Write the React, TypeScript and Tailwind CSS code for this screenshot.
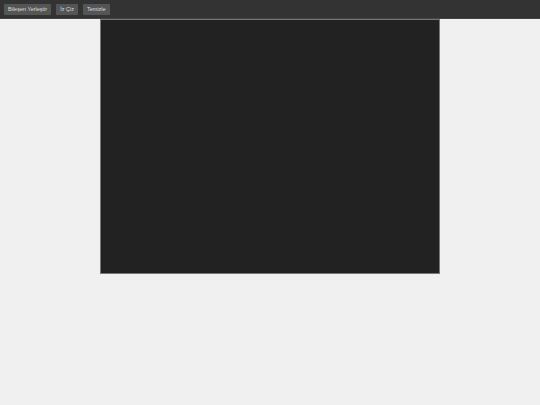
export default function App() {
  return (
    <div className="min-h-[405px] w-full bg-[#f0f0f0]" style={{ fontFamily: '"Liberation Sans", Arial, sans-serif' }}>
      <div className="flex h-[19px] items-center gap-[5px] border-b border-[#444] bg-[#333] px-[4px]">
        <button className="h-[11px] rounded-[1px] bg-[#555] px-[4px] text-[5.5px] leading-[11px] text-[#ddd]">Bileşen Yerleştir</button>
        <button className="h-[11px] rounded-[1px] bg-[#555] px-[4px] text-[5.5px] leading-[11px] text-[#ddd]">İz Çiz</button>
        <button className="h-[11px] rounded-[1px] bg-[#555] px-[4px] text-[5.5px] leading-[11px] text-[#ddd]">Temizle</button>
      </div>
      <div className="flex justify-center">
        <div className="h-[255px] w-[340px] border border-[#777] bg-[#222]" />
      </div>
    </div>
  );
}
